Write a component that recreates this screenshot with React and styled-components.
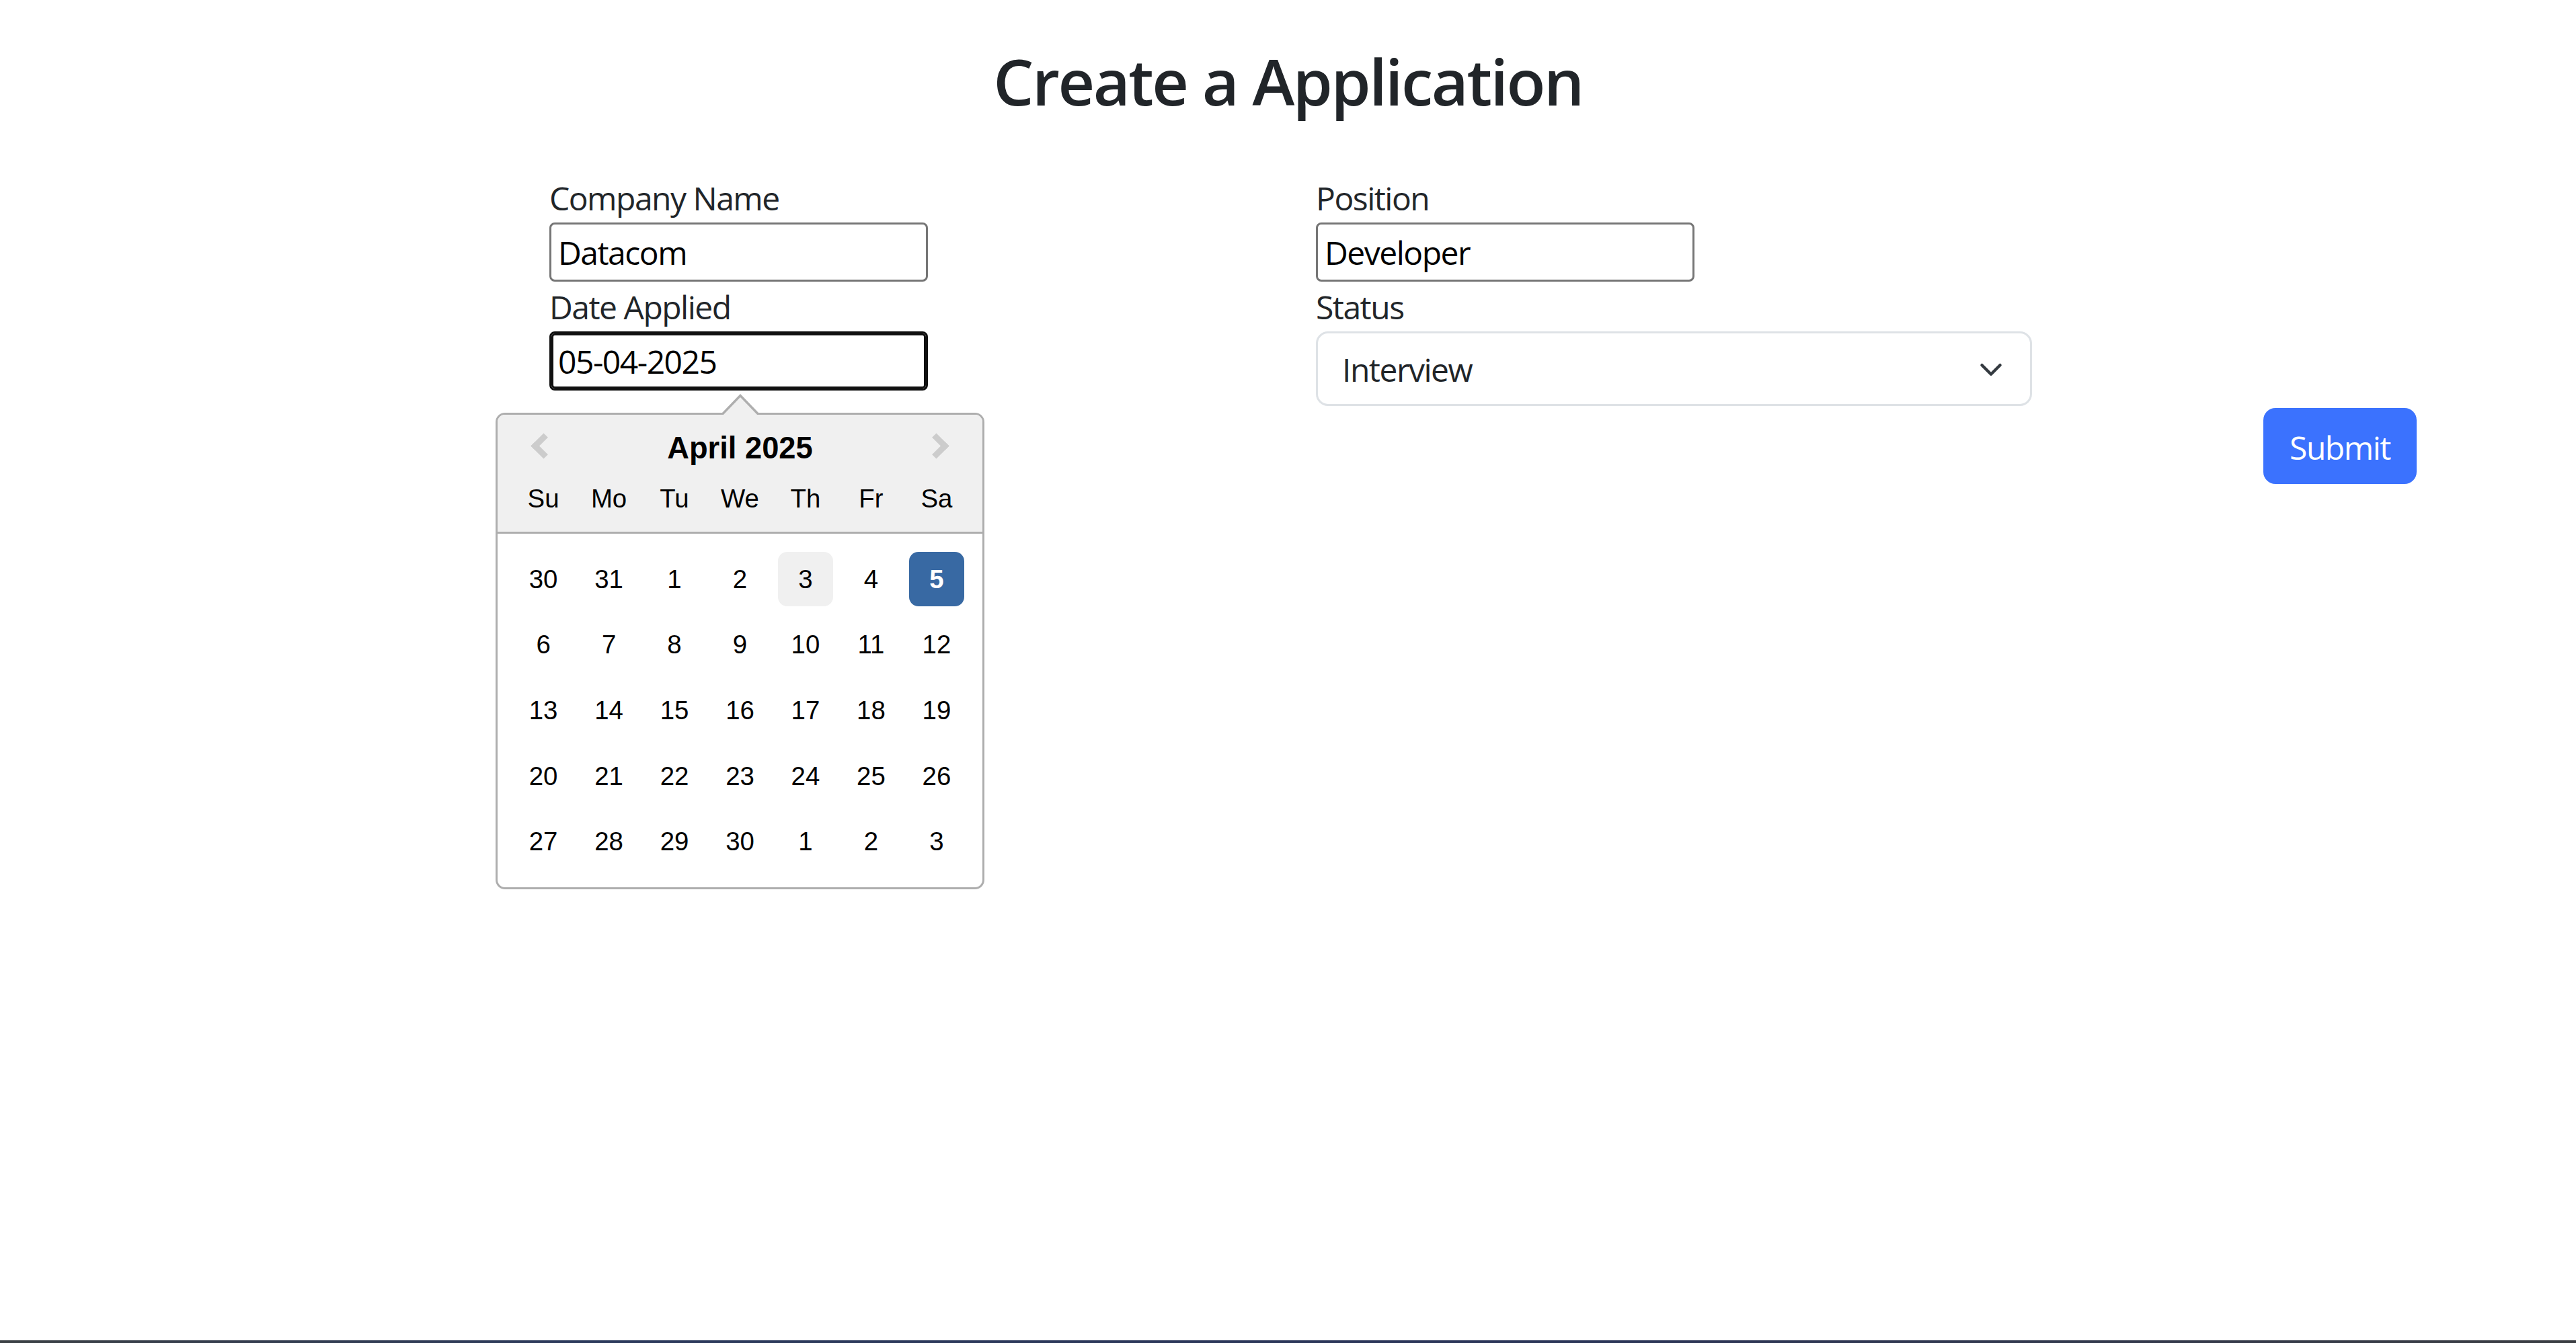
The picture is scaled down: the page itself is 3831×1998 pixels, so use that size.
import React from "react";
import styled, { createGlobalStyle } from "styled-components";

const WEEKDAYS = ["Su", "Mo", "Tu", "We", "Th", "Fr", "Sa"];

const WEEKS = [
  [30, 31, 1, 2, 3, 4, 5],
  [6, 7, 8, 9, 10, 11, 12],
  [13, 14, 15, 16, 17, 18, 19],
  [20, 21, 22, 23, 24, 25, 26],
  [27, 28, 29, 30, 1, 2, 3],
];

export default function App() {
  return (
    <>
      <GlobalStyle />
      <Page>
        <Main>
          <Title>Create a Application</Title>

          <Form onSubmit={(e) => e.preventDefault()}>
            <Fields>
              <Column>
                <Label>Company Name</Label>
                <TextInput defaultValue="Datacom" />
                <Label>Date Applied</Label>
                <DateField>
                  <TextInput $focused defaultValue="05-04-2025" />
                  <DatePicker />
                </DateField>
              </Column>

              <Column>
                <Label>Position</Label>
                <TextInput defaultValue="Developer" />
                <Label>Status</Label>
                <SelectBox role="combobox">
                  <span>Interview</span>
                  <Chevron />
                </SelectBox>
              </Column>
            </Fields>

            <Actions>
              <SubmitButton type="submit">Submit</SubmitButton>
            </Actions>
          </Form>
        </Main>
        <ScreenEdge />
      </Page>
    </>
  );
}

function DatePicker() {
  return (
    <Calendar>
      <CalendarHeader>
        <MonthBar>
          <NavIcon $dir="prev" />
          <MonthTitle>April 2025</MonthTitle>
          <NavIcon $dir="next" />
        </MonthBar>
        <WeekRow>
          {WEEKDAYS.map((d) => (
            <DayName key={d}>{d}</DayName>
          ))}
        </WeekRow>
      </CalendarHeader>

      <Month>
        {WEEKS.map((week, i) => (
          <WeekRow key={i}>
            {week.map((day, j) => (
              <Day
                key={j}
                $selected={i === 0 && j === 6}
                $hovered={i === 0 && j === 4}
              >
                {day}
              </Day>
            ))}
          </WeekRow>
        ))}
      </Month>
    </Calendar>
  );
}

function Chevron() {
  return (
    <ChevronSvg viewBox="0 0 16 16" fill="none">
      <path
        d="m2 5 6 6 6-6"
        stroke="#343a40"
        strokeWidth="2"
        strokeLinecap="round"
        strokeLinejoin="round"
      />
    </ChevronSvg>
  );
}

const GlobalStyle = createGlobalStyle`
  html, body {
    margin: 0;
    padding: 0;
    background: #ffffff;
  }

  body {
    font-family: "Open Sans", "Noto Sans", sans-serif;
    color: #212529;
  }

  * {
    box-sizing: border-box;
  }
`;

const Page = styled.div`
  min-height: 100vh;
  display: flex;
  flex-direction: column;
`;

const Main = styled.main`
  flex: 1;
  padding-top: 63px;
`;

const Title = styled.h1`
  margin: 0 0 82px 0;
  text-align: center;
  font-size: 95px;
  font-weight: 600;
  line-height: 1.2;
  letter-spacing: -2.5px;
  color: #212529;
`;

const Form = styled.form`
  margin-left: 817px;
  width: 2777px;
`;

const Fields = styled.div`
  display: grid;
  grid-template-columns: 1140px 1fr;
`;

const Column = styled.div`
  display: flex;
  flex-direction: column;
  align-items: flex-start;
`;

const Label = styled.label`
  display: block;
  font-size: 48px;
  line-height: 72px;
  letter-spacing: -1.5px;
  color: #212529;
`;

const TextInput = styled.input`
  width: 563px;
  height: 88px;
  margin: 0 0 2px 0;
  padding: 0 10px;
  font-family: "Open Sans", "Noto Sans", sans-serif;
  font-size: 48px;
  letter-spacing: -1.5px;
  color: #000000;
  background: #ffffff;
  border: 3px solid ${({ $focused }) => ($focused ? "#101010" : "#767676")};
  border-radius: 8px;
  box-shadow: ${({ $focused }) =>
    $focused ? "inset 0 0 0 3px #101010" : "none"};
  outline: none;
`;

const DateField = styled.div`
  position: relative;
`;

const Calendar = styled.div`
  position: absolute;
  top: calc(100% + 31px);
  left: -80px;
  z-index: 10;
  width: 727px;
  background: #ffffff;
  border: 3px solid #aeaeae;
  border-radius: 14px;
  font-family: "Liberation Sans", Arial, sans-serif;
  font-size: 38.4px;
  color: #000000;

  &::before,
  &::after {
    content: "";
    position: absolute;
    left: 50%;
    margin-left: -27px;
    border-left: 27px solid transparent;
    border-right: 27px solid transparent;
    border-bottom: 28px solid #aeaeae;
  }

  &::before {
    top: -31px;
  }

  &::after {
    top: -26px;
    border-bottom-color: #f0f0f0;
  }
`;

const CalendarHeader = styled.div`
  background: #f0f0f0;
  border-bottom: 3px solid #aeaeae;
  border-radius: 11px 11px 0 0;
  padding-top: 24px;
`;

const MonthBar = styled.div`
  display: grid;
  grid-template-columns: 132px 1fr 132px;
  align-items: center;
`;

const MonthTitle = styled.div`
  text-align: center;
  font-size: 45.3px;
  font-weight: 700;
  line-height: 52px;
`;

const NavIcon = styled.span`
  justify-self: center;
  display: block;
  width: 27px;
  height: 27px;
  margin-top: -7px;
  border-style: solid;
  border-color: #cccccc;
  border-width: 9px 9px 0 0;
  transform: rotate(${({ $dir }) => ($dir === "prev" ? -135 : 45)}deg);
  transform-origin: center;
  margin-left: ${({ $dir }) => ($dir === "prev" ? "4px" : "-6px")};
`;

const WeekRow = styled.div`
  display: flex;
  justify-content: center;
`;

const DayName = styled.div`
  width: 81.6px;
  margin: 8px 7.95px;
  line-height: 81.6px;
  text-align: center;
`;

const Month = styled.div`
  padding: 19.2px 0;
`;

const Day = styled.div`
  width: 81.6px;
  height: 81.6px;
  margin: 8px 7.95px;
  line-height: 81.6px;
  text-align: center;
  border-radius: 14px;
  font-weight: ${({ $selected }) => ($selected ? 700 : 400)};
  color: ${({ $selected }) => ($selected ? "#ffffff" : "#000000")};
  background: ${({ $selected, $hovered }) =>
    $selected ? "#3869a3" : $hovered ? "#f0f0f0" : "transparent"};
`;

const SelectBox = styled.div`
  width: 1065px;
  height: 111px;
  display: flex;
  align-items: center;
  justify-content: space-between;
  padding: 2px 40px 0 36px;
  font-size: 48px;
  letter-spacing: -1.5px;
  color: #212529;
  background: #ffffff;
  border: 3px solid #dee2e6;
  border-radius: 18px;
`;

const ChevronSvg = styled.svg`
  width: 36px;
  height: 36px;
  display: block;
`;

const Actions = styled.div`
  display: flex;
  justify-content: flex-end;
  margin-top: 3px;
`;

const SubmitButton = styled.button`
  width: 228px;
  height: 113px;
  padding: 4px 0 0 0;
  font-family: "Open Sans", "Noto Sans", sans-serif;
  font-size: 48px;
  letter-spacing: -1.5px;
  color: #ffffff;
  background: #3b72fe;
  border: none;
  border-radius: 18px;
  cursor: pointer;
`;

const ScreenEdge = styled.div`
  height: 4px;
  background: linear-gradient(
    90deg,
    #3b4044 0%,
    #2c3a5c 22%,
    #2b3558 62%,
    #3a3d42 100%
  );
`;
